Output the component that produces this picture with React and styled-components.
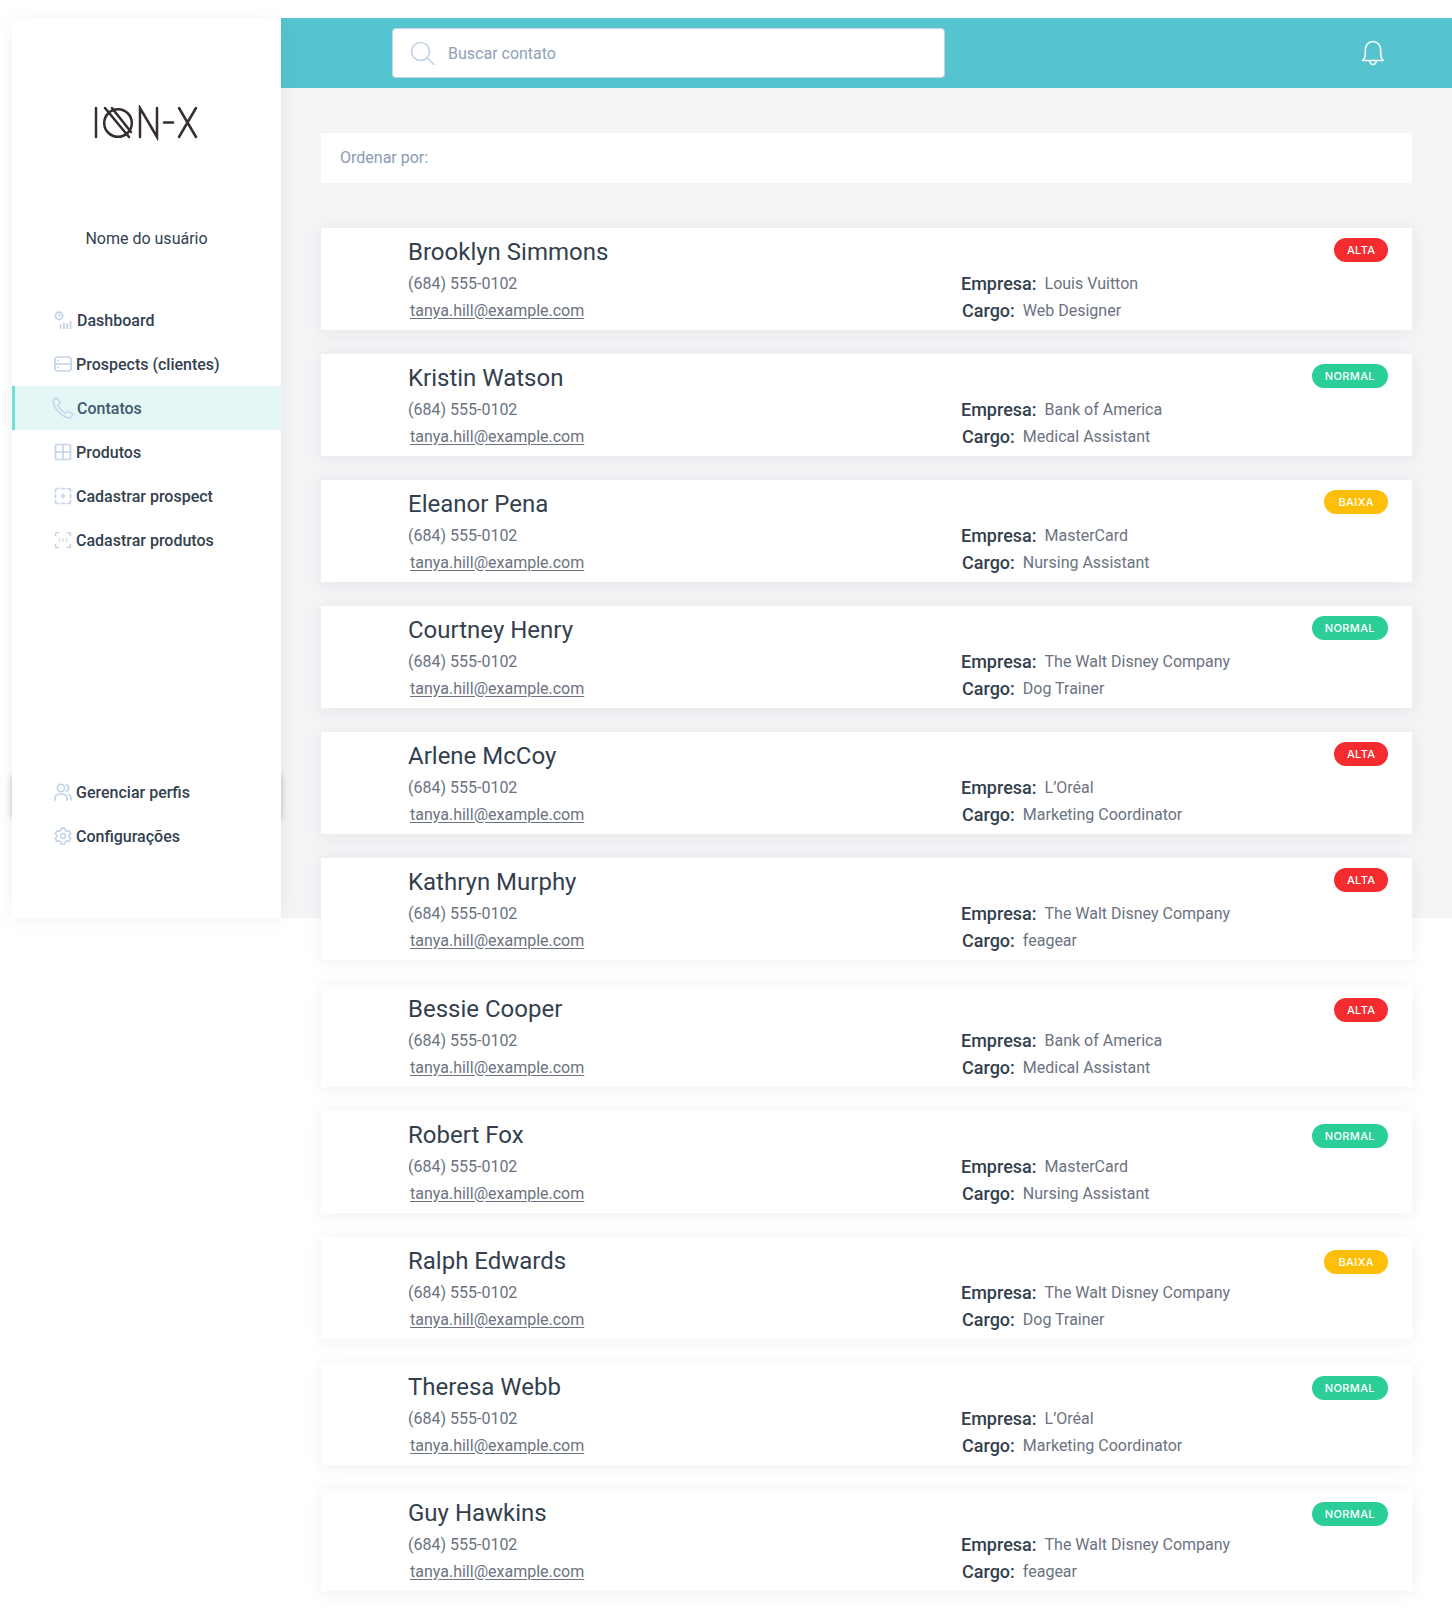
import styled, { createGlobalStyle } from 'styled-components';

const GlobalStyle = createGlobalStyle`
  html, body {
    margin: 0;
    padding: 0;
    background: #fff;
    font-family: Roboto, "Liberation Sans", sans-serif;
    color: #333f4e;
  }
  * { box-sizing: border-box; }
`;

const Page = styled.div`
  width: 1452px;
  height: 1609px;
  padding-top: 18px;
  overflow: hidden;
  display: flex;
  align-items: flex-start;
`;

const Sidebar = styled.aside`
  position: relative;
  z-index: 2;
  margin-left: 12px;
  width: 269px;
  height: 900px;
  flex: none;
  &::before {
    content: '';
    position: absolute;
    z-index: -1;
    left: 0;
    right: 0;
    top: 757px;
    height: 44px;
    box-shadow: 0 0 6px rgba(30, 40, 60, 0.3);
  }
`;

const SidePanel = styled.div`
  height: 100%;
  background: #fff;
  box-shadow: 0 3px 18px rgba(30, 40, 60, 0.055);
  display: flex;
  flex-direction: column;
`;

const LogoWrap = styled.div`
  height: 89px;
  margin-top: 87px;
  padding-left: 5px;
  display: flex;
  justify-content: center;
  svg { display: block; }
`;

const UserName = styled.div`
  margin-top: 33px;
  text-align: center;
  font-size: 16px;
  line-height: 24px;
  color: #333f4e;
`;

const Nav = styled.nav`
  margin-top: ${(p) => p.$top}px;
  display: flex;
  flex-direction: column;
`;

const NavItem = styled.div`
  height: 44px;
  padding-left: ${(p) => (p.$active ? 37 : 42)}px;
  display: flex;
  align-items: center;
  gap: ${(p) => (p.$active ? 2 : 4)}px;
  font-size: 16px;
  font-weight: 500;
  color: ${(p) => (p.$active ? '#41596a' : '#333f4e')};
  background: ${(p) => (p.$active ? '#e3f7f7' : 'transparent')};
  border-left: ${(p) => (p.$active ? '3px solid #74e0dc' : '0')};
  svg { flex: none; }
`;

const Main = styled.main`
  flex: 1;
  height: 900px;
  background: #f3f4f6;
  min-width: 0;
`;

const Header = styled.header`
  height: 70px;
  background: #55c4cf;
  display: flex;
  align-items: center;
  padding-left: 111px;
  padding-right: 67px;
  justify-content: space-between;
`;

const SearchBox = styled.div`
  width: 553px;
  height: 50px;
  background: #fff;
  border: 1px solid #c5d5e6;
  border-radius: 4px;
  display: flex;
  align-items: center;
  padding-left: 17px;
  gap: 12px;
  font-size: 16px;
  color: #8fa1ba;
`;

const Content = styled.div`
  padding: 45px 40px 0;
`;

const SortBar = styled.div`
  height: 50px;
  background: #fff;
  padding: 0 0 2px 19px;
  display: flex;
  align-items: center;
  font-size: 16px;
  color: #8a9bb3;
`;

const List = styled.div`
  margin-top: 45px;
  display: flex;
  flex-direction: column;
  gap: 24px;
`;

const Card = styled.article`
  position: relative;
  height: 102px;
  margin-top: ${(p) => (p.$late ? 1 : 0)}px;
  background: #fff;
  box-shadow: 0 2px 16px rgba(30, 40, 60, 0.07);
  display: flex;
`;

const Person = styled.div`
  width: 640px;
  padding: 9px 0 0 87px;
  flex: none;
`;

const Name = styled.div`
  font-size: 24px;
  line-height: 30px;
  color: #333f4e;
`;

const Phone = styled.div`
  margin-top: 5px;
  font-size: 16px;
  line-height: 24px;
  color: #6b7280;
`;

const Email = styled.a`
  display: inline-block;
  margin: 3px 0 0 2px;
  font-size: 16px;
  line-height: 24px;
  color: #6b7280;
  text-decoration: underline;
  text-underline-offset: 2px;
`;

const Details = styled.div`
  padding-top: 42px;
`;

const Row = styled.div`
  height: 27px;
  display: flex;
  align-items: center;
  padding-left: ${(p) => p.$indent}px;
  font-size: 16px;
  color: #6b7280;
`;

const Label = styled.span`
  font-size: 18px;
  font-weight: 500;
  color: #333f4e;
  margin-right: 8px;
`;

const badges = {
  ALTA: { color: '#f42c2f', pad: 12.5 },
  NORMAL: { color: '#2bce98', pad: 13 },
  BAIXA: { color: '#fdbf0a', pad: 14 },
};

const Badge = styled.span`
  position: absolute;
  top: ${(p) => (p.$late ? 13 : 10)}px;
  right: 24px;
  height: 24px;
  padding: 0 ${(p) => badges[p.$level].pad}px;
  border-radius: 12px;
  background: ${(p) => badges[p.$level].color};
  color: #fff;
  font-family: Inter, Roboto, sans-serif;
  font-size: 11px;
  font-weight: 500;
  letter-spacing: 0.4px;
  display: flex;
  align-items: center;
`;

const iconColor = '#c5d4e8';

const Icon = ({ size = 18, children, box = '0 0 18 18', width = 1.7 }) => (
  <svg width={size} height={size} viewBox={box} fill="none" stroke={iconColor} strokeWidth={width} strokeLinecap="round" strokeLinejoin="round">
    {children}
  </svg>
);

const DashIcon = () => (
  <Icon size={19}>
    <circle cx="4.800" cy="4.500" r="3.400" />
    <path d="M4.800 2.800v1.900h1.600" strokeWidth="1.200" />
    <path d="M6.300 16.500v-3M9.400 16.500v-5M12.500 16.500v-4M15.600 16.500V10" />
  </Icon>
);
const ProspectIcon = () => (
  <Icon>
    <rect x="1" y="2" width="16" height="14" rx="2.500" />
    <path d="M1 9h16M4 5.500h.4M4 12.500h.4" />
  </Icon>
);
const PhoneIcon = () => (
  <Icon size={23} box="0 0 24 24" width={1.500}>
    <path d="M1.500 3.200 4 1.200c.6-.4 1.300-.3 1.700.3l2.400 3.600c.3.500.3 1.100-.1 1.500L6.300 8.400c1.400 3.900 4.100 6.800 7.900 8.600l1.800-1.700c.4-.4 1-.5 1.500-.2l3.500 2.200c.7.400.8 1.300.3 1.900l-1.900 2.200c-.5.500-1.200.7-1.900.6C9.600 20.200 3 13.300 1 5c-.2-.7 0-1.300.5-1.800Z" />
  </Icon>
);
const ProductIcon = () => (
  <Icon>
    <rect x="1.500" y="1.500" width="15" height="15" rx="2" />
    <path d="M9 1.500v15M1.500 9h15" />
  </Icon>
);

const Corners = () => (
  <path d="M1.500 4.500v-1a2 2 0 0 1 2-2h1M13.500 1.500h1a2 2 0 0 1 2 2v1M1.500 13.500v1a2 2 0 0 0 2 2h1M13.500 16.500h1a2 2 0 0 0 2-2v-1" />
);

const AddIcon = () => (
  <Icon>
    <Corners />
    <path d="M7.500 1.500h3M7.500 16.500h3M1.500 7.500v3M16.500 7.500v3" />
    <path d="M9 6.800v4.400M6.800 9h4.400" strokeWidth="1.400" />
  </Icon>
);
const AddDotsIcon = () => (
  <Icon>
    <Corners />
    <path d="M5.500 7.800v2.400M9 7.800v2.400M12.500 7.800v2.400" strokeWidth="1.300" strokeDasharray="1 1.200" />
  </Icon>
);
const UsersIcon = () => (
  <Icon>
    <circle cx="7" cy="5" r="3.700" />
    <path d="M1 17v-1.500C1 12.500 3.500 11 7 11s6 1.500 6 4.500V17M12.300 1.600c1.600.5 2.500 1.800 2.500 3.400s-.9 2.900-2.500 3.400M14.500 11.300c1.600.6 2.600 2 2.600 4V17" />
  </Icon>
);
const GearIcon = () => (
  <Icon>
    <circle cx="9" cy="9" r="2.500" />
    <path d="M7.300 1.200h3.400l.6 2.200 1.600.9 2.200-.6 1.700 2.900-1.600 1.600v1.800l1.600 1.600-1.700 2.900-2.200-.6-1.600.9-.6 2.200H7.300l-.6-2.200-1.600-.9-2.200.6-1.700-2.900 1.600-1.600V8.200L1.200 6.600l1.700-2.900 2.200.6 1.600-.9.6-2.200Z" />
  </Icon>
);

const SearchIcon = () => (
  <svg width="26" height="24" viewBox="0 0 26 24" fill="none" stroke="#c5d4e8" strokeWidth="1.700" strokeLinecap="round">
    <circle cx="10.500" cy="10.500" r="9" />
    <path d="m17 17 7 6.500" />
  </svg>
);

const BellIcon = () => (
  <svg width="24" height="26" viewBox="0 0 24 26" fill="none" stroke="#fff" strokeWidth="1.600" strokeLinecap="round" strokeLinejoin="round">
    <path d="M1.500 20.500c1.800-1.500 2.800-3 2.800-5.500V10c0-4.500 3.200-8.500 7.700-8.500s7.700 4 7.700 8.500v5c0 2.500 1 4 2.800 5.500Z" />
    <path d="M8.800 20.800c0 2 1.400 3.700 3.200 3.700s3.200-1.700 3.200-3.700" />
  </svg>
);

const Logo = () => (
  <svg width="110" height="36" viewBox="0 0 110 36" fill="none" stroke="#352d2f" strokeWidth="2.500" strokeLinecap="round">
    <path d="M2 3v29" />
    <circle cx="24" cy="18" r="13.800" />
    <path d="M11 3 35 32M18 3l19 24" />
    <path d="M46 32V3l17 29V3" />
    <path d="M70 17.500h9" />
    <path d="M85 3l17 29M102 3 85 32" />
  </svg>
);

const contacts = [
  ['Brooklyn Simmons', 'Louis Vuitton', 'Web Designer', 'ALTA'],
  ['Kristin Watson', 'Bank of America', 'Medical Assistant', 'NORMAL'],
  ['Eleanor Pena', 'MasterCard', 'Nursing Assistant', 'BAIXA'],
  ['Courtney Henry', 'The Walt Disney Company', 'Dog Trainer', 'NORMAL'],
  ['Arlene McCoy', 'L’Oréal', 'Marketing Coordinator', 'ALTA'],
  ['Kathryn Murphy', 'The Walt Disney Company', 'feagear', 'ALTA'],
  ['Bessie Cooper', 'Bank of America', 'Medical Assistant', 'ALTA'],
  ['Robert Fox', 'MasterCard', 'Nursing Assistant', 'NORMAL'],
  ['Ralph Edwards', 'The Walt Disney Company', 'Dog Trainer', 'BAIXA'],
  ['Theresa Webb', 'L’Oréal', 'Marketing Coordinator', 'NORMAL'],
  ['Guy Hawkins', 'The Walt Disney Company', 'feagear', 'NORMAL'],
];

export default function App() {
  return (
    <>
      <GlobalStyle />
      <Page>
        <Sidebar>
          <SidePanel>
            <LogoWrap>
              <Logo />
            </LogoWrap>
            <UserName>Nome do usuário</UserName>
            <Nav $top={47}>
              <NavItem><DashIcon />Dashboard</NavItem>
              <NavItem><ProspectIcon />Prospects (clientes)</NavItem>
              <NavItem $active><PhoneIcon />Contatos</NavItem>
              <NavItem><ProductIcon />Produtos</NavItem>
              <NavItem><AddIcon />Cadastrar prospect</NavItem>
              <NavItem><AddDotsIcon />Cadastrar produtos</NavItem>
            </Nav>
            <Nav $top={208}>
              <NavItem><UsersIcon />Gerenciar perfis</NavItem>
              <NavItem><GearIcon />Configurações</NavItem>
            </Nav>
          </SidePanel>
        </Sidebar>
        <Main>
          <Header>
            <SearchBox><SearchIcon />Buscar contato</SearchBox>
            <BellIcon />
          </Header>
          <Content>
            <SortBar>Ordenar por:</SortBar>
            <List>
              {contacts.map(([name, company, role, level], i) => (
                <Card key={name} $late={i === 6}>
                  <Person>
                    <Name>{name}</Name>
                    <Phone>(684) 555-0102</Phone>
                    <Email>tanya.hill@example.com</Email>
                  </Person>
                  <Details>
                    <Row $indent={0}><Label>Empresa:</Label>{company}</Row>
                    <Row $indent={1}><Label>Cargo:</Label>{role}</Row>
                  </Details>
                  <Badge $level={level} $late={i >= 6}>{level}</Badge>
                </Card>
              ))}
            </List>
          </Content>
        </Main>
      </Page>
    </>
  );
}
